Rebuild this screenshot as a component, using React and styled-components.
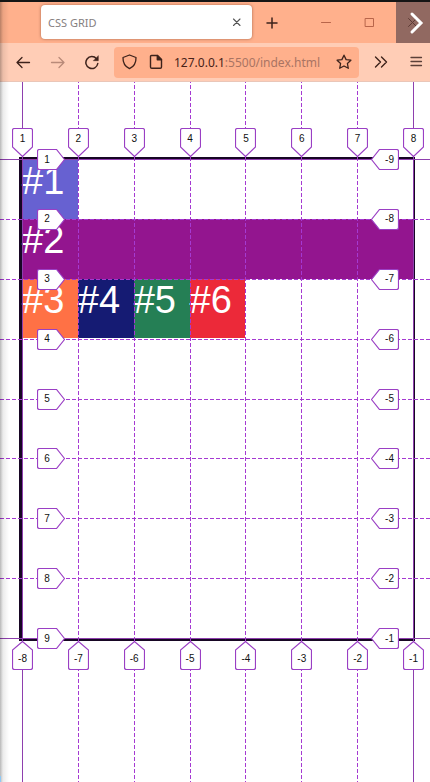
import React from "react";
import styled, { createGlobalStyle } from "styled-components";

const GlobalStyle = createGlobalStyle`
  *, *::before, *::after { box-sizing: border-box; }
  body { margin: 0; background: #fff; font-family: "Noto Sans", "Open Sans", sans-serif; }
  button, input { font: inherit; color: inherit; }
`;

const Browser = styled.div`
  min-height: 100vh;
  display: flex;
  flex-direction: column;
  position: relative;
  border-top: 2px solid #151515;
`;

const EdgeShadow = styled.div`
  position: absolute;
  inset: 0 auto 0 0;
  width: 9px;
  pointer-events: none;
  background: linear-gradient(to right, rgba(0, 0, 0, 0.28), rgba(0, 0, 0, 0.08) 3px, transparent);

  &::after {
    content: "";
    position: absolute;
    left: 0;
    bottom: 0;
    width: 1px;
    height: 7px;
    background: #8ec8f5;
  }
`;

const TabStrip = styled.header`
  height: 41px;
  display: flex;
  align-items: stretch;
  background: #ffb08c;
  padding-left: 41px;
`;

const Tab = styled.div`
  flex: 0 1 211px;
  min-width: 0;
  margin: 3px 0 4px;
  padding: 0 7px;
  display: flex;
  align-items: center;
  justify-content: space-between;
  background: #fff;
  border-radius: 4px;
  box-shadow: 0 0 3px rgba(90, 40, 20, 0.55);
  color: #85807f;
  font-size: 11px;
`;

const IconButton = styled.button`
  flex: none;
  width: ${(p) => p.$width || 16}px;
  padding: 0;
  border: 0;
  background: ${(p) => p.$fill || "transparent"};
  color: ${(p) => p.$color || "#3d221b"};
  display: flex;
  align-items: center;
  justify-content: center;
`;

const WindowButtons = styled.div`
  margin-left: auto;
  display: flex;
`;

const NavBar = styled.nav`
  height: 39px;
  display: flex;
  align-items: center;
  padding: 0 1px 0 5px;
  background: #ffcdb6;
  border-bottom: 1px solid #eac6b8;
`;

const AddressBar = styled.div`
  flex: 1;
  min-width: 0;
  height: 31px;
  margin-left: 5px;
  padding: 0 6px;
  display: flex;
  align-items: center;
  gap: 9px;
  background: #ffb08c;
  border-radius: 4px;
`;

const Address = styled.div`
  flex: 1;
  min-width: 0;
  padding-top: 2px;
  font-size: 12px;
  line-height: 20px;
  color: #a97463;
  white-space: nowrap;
  overflow: hidden;

  b { font-weight: 400; color: #472219; }
`;

const Page = styled.main`
  flex: 1;
  position: relative;
  overflow: hidden;
  padding: 75px 15px 142px 19px;
`;

const Grid = styled.section`
  position: relative;
  border: 3px solid #170624;
  border-right-width: 2px;
  display: grid;
  grid-template-columns: repeat(7, 1fr);
  grid-template-rows: 59px 60px 59px repeat(5, 60px);
`;

const Tile = styled.div`
  min-width: 0;
  background: ${(p) => p.$color};
  grid-column: ${(p) => (p.$wide ? "1 / -1" : "auto")};
  color: #fff;
  font: 38px/43px "Liberation Sans", Arial, sans-serif;
`;

const Overlay = styled.div`
  position: absolute;
  inset: -1px 0 0;
  pointer-events: none;
`;

const stroke = (p) =>
  p.$solid ? "#8e3fae" : `repeating-linear-gradient(${p.$angle}, #a53ad2 0 4px, transparent 4px 6px)`;

const ColumnLine = styled.div`
  position: absolute;
  top: -100vh;
  bottom: -100vh;
  left: ${(p) => (p.$index * 100) / 7}%;
  width: 1px;
  background: ${stroke};
`;

const RowLine = styled.div`
  position: absolute;
  left: -100vw;
  right: -100vw;
  top: ${(p) => (p.$index * 100) / 8}%;
  height: 1px;
  background: ${stroke};
`;

const places = {
  down: (i) => `left: ${(i * 100) / 7}%; top: -31px; margin-left: -10px; padding-bottom: 8px;`,
  up: (i) => `left: ${(i * 100) / 7}%; bottom: -32px; margin-left: -10px; padding-top: 7px;`,
  right: (i) => `top: ${(i * 100) / 8}%; left: 15px; margin-top: -10px; padding-right: 8px;`,
  left: (i) => `top: ${(i * 100) / 8}%; right: 14px; margin-top: -10px; padding-left: 9px;`,
};

const Marker = styled.div`
  position: absolute;
  display: flex;
  align-items: center;
  justify-content: center;
  width: ${(p) => (p.$dir === "up" || p.$dir === "down" ? 21 : 28)}px;
  height: ${(p) => (p.$dir === "up" || p.$dir === "down" ? 29 : 21)}px;
  font: 10px/12px "Liberation Sans", Arial, sans-serif;
  color: #111;
  ${(p) => places[p.$dir](p.$index)}

  svg { position: absolute; inset: 0; }
  span { position: relative; }
`;

const shapes = {
  down: "M2.5.5H18.5Q20.5.5 20.5 2.5V19L10.5 28.5L.5 19V2.5Q.5.5 2.5.5Z",
  up: "M2.5 28.5H18.5Q20.5 28.5 20.5 26.5V9L10.5.5L.5 9V26.5Q.5 28.5 2.5 28.5Z",
  right: "M2.5.5H19.5L27.5 10.5L19.5 20.5H2.5Q.5 20.5.5 18.5V2.5Q.5.5 2.5.5Z",
  left: "M25.5.5H8.5L.5 10.5L8.5 20.5H25.5Q27.5 20.5 27.5 18.5V2.5Q27.5.5 25.5.5Z",
};

function LineMarker({ dir, index, children }) {
  const vertical = dir === "up" || dir === "down";
  return (
    <Marker $dir={dir} $index={index}>
      <svg width={vertical ? 21 : 28} height={vertical ? 29 : 21} aria-hidden="true">
        <path d={shapes[dir]} fill="#fff" stroke="#9a3fc4" strokeWidth="1.2" />
      </svg>
      <span>{children}</span>
    </Marker>
  );
}

function Icon({ size = 16, width = 1.3, children }) {
  return (
    <svg width={size} height={size} viewBox={`0 0 ${size} ${size}`} fill="none" stroke="currentColor"
      strokeWidth={width} strokeLinecap="round" strokeLinejoin="round" aria-hidden="true">
      {children}
    </svg>
  );
}

const tiles = [
  { label: "#1", color: "#6761d1" },
  { label: "#2", color: "#93158f", wide: true },
  { label: "#3", color: "#ff7145" },
  { label: "#4", color: "#151b73" },
  { label: "#5", color: "#257f55" },
  { label: "#6", color: "#ec2939" },
];
const columns = [0, 1, 2, 3, 4, 5, 6, 7];
const rows = [0, 1, 2, 3, 4, 5, 6, 7, 8];

export default function App() {
  return (
    <Browser>
      <GlobalStyle />
      <TabStrip>
        <Tab>
          <span>CSS GRID</span>
          <IconButton aria-label="Close tab" $color="#555">
            <Icon width={1.1}><path d="M4.5 5L11 11.5M11 5L4.5 11.5" /></Icon>
          </IconButton>
        </Tab>
        <IconButton aria-label="New tab" $width={40}>
          <Icon width={1.5}><path d="M8 3V13M3 8H13" /></Icon>
        </IconButton>
        <WindowButtons>
          <IconButton aria-label="Minimize" $width={32} $color="#b8654a">
            <Icon width={1}><path d="M3.5 7.5H12.5" /></Icon>
          </IconButton>
          <IconButton aria-label="Maximize" $width={54} $color="#b8654a">
            <Icon width={1}><path d="M4.5 3.5H12.5V11.5H4.5Z" /></Icon>
          </IconButton>
          <IconButton aria-label="Close window" $width={34} $fill="#916961">
            <Icon size={34} width={1}>
              <path d="M12.5 12.5L20.5 20.5M20.5 12.5L12.5 20.5" stroke="#5d3b35" />
              <path d="M16 8L25 17L16 26" stroke="#fff" strokeWidth="3" strokeLinejoin="miter" />
            </Icon>
          </IconButton>
        </WindowButtons>
      </TabStrip>
      <NavBar>
        <IconButton aria-label="Back" $width={35}>
          <Icon><path d="M14.5 8.5H2M7 3.5L2 8.5L7 13.5" /></Icon>
        </IconButton>
        <IconButton aria-label="Forward" $width={35} $color="#b98a79">
          <Icon><path d="M1.5 8.5H14M9 3.5L14 8.5L9 13.5" /></Icon>
        </IconButton>
        <IconButton aria-label="Reload" $width={34}>
          <Icon width={1.5}>
            <path d="M13.8 9.5A6 6 0 1 1 12.5 4.7" />
            <path d="M14.3 2V6.7H9.6Z" fill="currentColor" strokeWidth="0.5" />
          </Icon>
        </IconButton>
        <AddressBar>
          <IconButton aria-label="Tracking protection" $width={18}>
            <Icon><path d="M8.5 1L15 3.5C15.2 8.5 13 12.5 8.5 14.7C4 12.5 1.8 8.5 2 3.5Z" /></Icon>
          </IconButton>
          <IconButton aria-label="Site information" $width={18}>
            <Icon width={1.4}>
              <path d="M3.5 1.5H9.5L13.5 5.5V13Q13.5 14.3 12.2 14.3H3.8Q2.5 14.3 2.5 13V2.5Q2.5 1.5 3.5 1.5Z" />
              <path d="M9.3 1.5V5.7H13.5Z" fill="currentColor" />
            </Icon>
          </IconButton>
          <Address><b>127.0.0.1</b>:5500/index.html</Address>
          <IconButton aria-label="Bookmark" $width={18}>
            <Icon><path d="M8 1.2L10.1 5.6L14.9 6.2L11.4 9.5L12.3 14.3L8 12L3.7 14.3L4.6 9.5L1.1 6.2L5.9 5.6Z" /></Icon>
          </IconButton>
        </AddressBar>
        <IconButton aria-label="More tools" $width={44}>
          <Icon width={1.4}><path d="M2.5 3L7.5 8L2.5 13M8.5 3L13.5 8L8.5 13" /></Icon>
        </IconButton>
        <IconButton aria-label="Menu" $width={26} $color="#5b4038">
          <Icon width={1.3}><path d="M3 3.5H13.5M3 7.5H13.5M3 11.5H13.5" /></Icon>
        </IconButton>
      </NavBar>
      <Page>
        <Grid>
          {tiles.map((t) => (
            <Tile key={t.label} $color={t.color} $wide={t.wide}>{t.label}</Tile>
          ))}
          <Overlay>
            {columns.map((i) => <ColumnLine key={i} $index={i} $angle="to bottom" $solid={i === 0 || i === 7} />)}
            {rows.map((i) => <RowLine key={i} $index={i} $angle="to right" $solid={i === 0 || i === 8} />)}
            {columns.map((i) => <LineMarker key={i} dir="down" index={i}>{i + 1}</LineMarker>)}
            {columns.map((i) => <LineMarker key={i} dir="up" index={i}>{i - 8}</LineMarker>)}
            {rows.map((i) => <LineMarker key={i} dir="right" index={i}>{i + 1}</LineMarker>)}
            {rows.map((i) => <LineMarker key={i} dir="left" index={i}>{i - 9}</LineMarker>)}
          </Overlay>
        </Grid>
      </Page>
      <EdgeShadow />
    </Browser>
  );
}
